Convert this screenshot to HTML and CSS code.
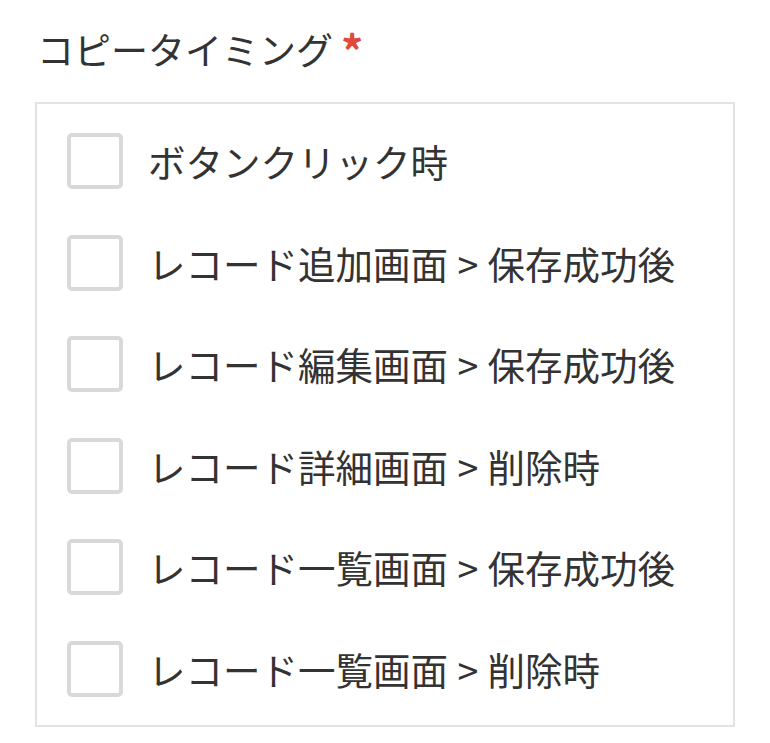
FILE: index.html
```html
<!DOCTYPE html>
<html lang="ja">
<head>
<meta charset="utf-8">
<link rel="stylesheet" href="styles.css">
</head>
<body>
<div class="field">
  <div class="field-label">コピータイミング<span class="required">*</span></div>
  <div class="options">
    <label class="option"><span class="box"></span><span class="text">ボタンクリック時</span></label>
    <label class="option"><span class="box"></span><span class="text">レコード追加画面 &gt; 保存成功後</span></label>
    <label class="option"><span class="box"></span><span class="text">レコード編集画面 &gt; 保存成功後</span></label>
    <label class="option"><span class="box"></span><span class="text">レコード詳細画面 &gt; 削除時</span></label>
    <label class="option"><span class="box"></span><span class="text">レコード一覧画面 &gt; 保存成功後</span></label>
    <label class="option"><span class="box"></span><span class="text">レコード一覧画面 &gt; 削除時</span></label>
  </div>
</div>
</body>
</html>
```
FILE: styles.css
```css
html, body {
  margin: 0;
  padding: 0;
  background: #ffffff;
}
body {
  font-family: "Noto Sans CJK JP", "Noto Sans", sans-serif;
  color: #333333;
}
.field {
  padding: 24px 0 0 35px;
  width: 700px;
}
.field-label {
  font-size: 37px;
  line-height: 50px;
  padding-left: 2px;
  height: 52px;
  color: #333333;
  white-space: nowrap;
}
.required {
  color: #e2493b;
  font-weight: bold;
  margin-left: 8px;
  font-size: 44px;
  line-height: 0;
  vertical-align: -3px;
}
.options {
  margin-top: 26px;
  border: 2px solid #e3e3e3;
  padding: 29px 30px 28px 30px;
  display: flex;
  flex-direction: column;
  gap: 45.6px;
}
.option {
  display: flex;
  align-items: center;
  gap: 25px;
  height: 56px;
}
.box {
  flex: none;
  box-sizing: border-box;
  width: 56px;
  height: 56px;
  border: 4px solid #d9d9d9;
  border-radius: 5px;
  background: #ffffff;
}
.text {
  font-size: 37.5px;
  line-height: 56px;
  color: #333333;
  white-space: nowrap;
  word-spacing: 1px;
}
```
